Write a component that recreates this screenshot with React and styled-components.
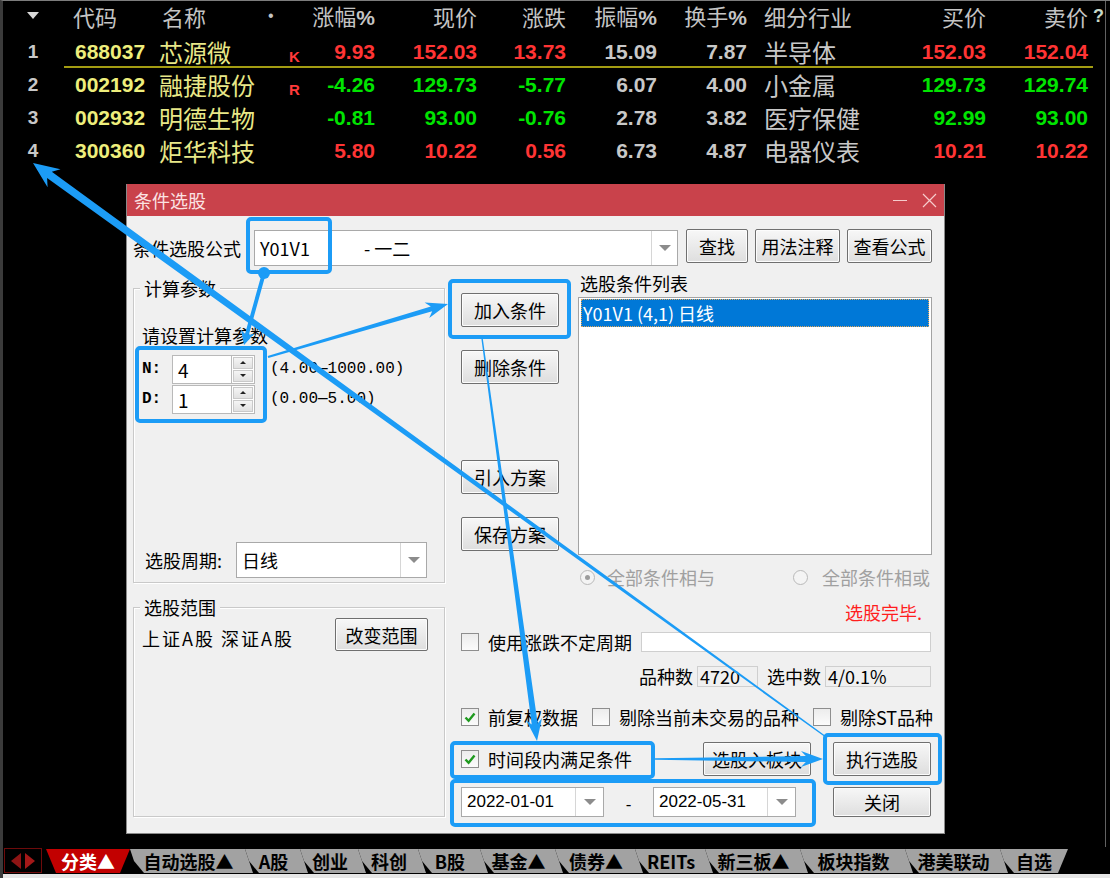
import React from "react";
import styled, { createGlobalStyle } from "styled-components";

const CJK = `"Noto Sans CJK SC", "Noto Sans", sans-serif`;
const NUM = `"Liberation Sans", Arial, sans-serif`;
const MONO = `"Liberation Mono", "DejaVu Sans Mono", monospace`;
const BLUE = "#1c9cf6";

const GlobalStyle = createGlobalStyle`
  * { box-sizing: border-box; }
  html, body { margin: 0; padding: 0; background: #000; }
  body { width: 1110px; height: 878px; overflow: hidden; font-family: ${CJK}; }
`;

const Screen = styled.div`
  position: relative;
  width: 1110px;
  height: 878px;
  background: #000;
  border-left: 3px solid #3b3b3b;
  border-top: 1px solid #7c7c7c;
  display: flex;
  flex-direction: column;
  overflow: hidden;
`;

const MainArea = styled.div`
  flex: 1;
  display: flex;
  min-height: 0;
`;

const Content = styled.div`
  flex: 1;
  display: flex;
  flex-direction: column;
  min-width: 0;
`;

const Rail = styled.div`
  width: 5px;
  flex: none;
  border-left: 1px solid #626262;
`;

/* ---------- quote table ---------- */
const QuoteRow = styled.div`
  position: relative;
  display: grid;
  grid-template-columns: 30px 111px 101px 50px 65px 102px 89px 91px 90px 153px 86px 102px auto;
  align-items: center;
  padding-left: 15px;
  height: ${(p) => (p.$header ? 34 : 33)}px;
  padding-bottom: ${(p) => (p.$header ? 4 : 0)}px;
  &::after {
    content: "";
    display: ${(p) => (p.$underline ? "block" : "none")};
    position: absolute;
    left: 61px;
    right: 12px;
    bottom: 0;
    height: 2px;
    background: #a39c12;
  }
`;

const HeadCell = styled.div`
  font-family: ${CJK};
  font-size: 22px;
  line-height: 1;
  color: #c4c4c4;
  white-space: nowrap;
  text-align: ${(p) => p.$align || "left"};
  padding-left: ${(p) => p.$pad || 0}px;
`;

const Pct = styled.span`
  font-family: ${NUM};
  font-weight: 700;
  font-size: 21px;
`;

const SortMark = styled.span`
  justify-self: center;
  width: 0;
  height: 0;
  border-left: 6px solid transparent;
  border-right: 6px solid transparent;
  border-top: 7px solid #d8d8d8;
  margin-bottom: 2px;
`;

const HeadDot = styled.span`
  font-family: ${NUM};
  font-size: 16px;
  color: #c4c4c4;
  padding-left: 8px;
`;

const HeadEdge = styled.span`
  font-family: ${NUM};
  font-weight: 700;
  font-size: 18px;
  color: #c8d8c8;
  padding-left: 5px;
`;

const RowIndex = styled.div`
  font-family: ${NUM};
  font-weight: 700;
  font-size: 19px;
  line-height: 1;
  color: #c8c8c8;
  text-align: center;
`;

const CodeCell = styled.div`
  font-family: ${NUM};
  font-weight: 700;
  font-size: 21px;
  line-height: 1;
  color: #eeee7c;
  padding-left: 27px;
`;

const NameCell = styled.div`
  font-family: ${CJK};
  font-size: 24px;
  line-height: 1;
  color: #e8e888;
  white-space: nowrap;
`;

const MarkCell = styled.div`
  font-family: ${NUM};
  font-weight: 700;
  font-size: 15px;
  line-height: 1;
  color: #ff3a3a;
  padding-left: 29px;
  margin-top: 10px;
`;

const TONES = { up: "#ff3434", down: "#00e400", flat: "#c8c8c8" };

const ValueCell = styled.div`
  font-family: ${NUM};
  font-weight: 700;
  font-size: 21px;
  line-height: 1;
  text-align: right;
  color: ${(p) => TONES[p.$tone]};
`;

const IndustryCell = styled.div`
  font-family: ${CJK};
  font-size: 24px;
  line-height: 1;
  color: #c8c8c8;
  padding-left: 17px;
  white-space: nowrap;
`;

/* ---------- workspace / dialog ---------- */
const Workspace = styled.div`
  flex: 1;
  padding: 17px 0 0 123px;
`;

const Dialog = styled.div`
  width: 819px;
  height: 650px;
  background: #f0f0f0;
  border: 1px solid #8a8a8a;
  border-top: none;
  display: flex;
  flex-direction: column;
  font-family: ${CJK};
  font-size: 18px;
  color: #000;
`;

const TitleBar = styled.div`
  height: 32px;
  flex: none;
  background: #c9424b;
  display: flex;
  align-items: center;
  justify-content: space-between;
  padding: 0 7px 0 7px;
  color: #fbe3e3;
  font-size: 18px;
  line-height: 1;
`;

const TitleControls = styled.div`
  display: flex;
  align-items: center;
  gap: 15px;
`;

const MinimizeGlyph = styled.span`
  width: 14px;
  height: 1px;
  background: #f6cccc;
`;

const DialogBody = styled.div`
  flex: 1;
  display: flex;
  flex-direction: column;
  padding: 14px 0 0 6px;
`;

const FormulaRow = styled.div`
  display: flex;
  align-items: flex-start;
  height: 36px;
`;

const FieldLabel = styled.div`
  width: ${(p) => p.$w}px;
  flex: none;
  line-height: ${(p) => p.$lh || 36}px;
  white-space: nowrap;
`;

const Combo = styled.div`
  width: ${(p) => p.$w}px;
  height: ${(p) => p.$h}px;
  flex: none;
  display: flex;
  background: #fff;
  border: 1px solid #a9a9a9;
`;

const ComboText = styled.div`
  flex: 1;
  display: flex;
  align-items: center;
  padding-left: ${(p) => p.$pad || 5}px;
  font-family: ${(p) => (p.$num ? NUM : CJK)};
  font-size: ${(p) => (p.$num ? 17 : 18)}px;
  white-space: pre;
  overflow: hidden;
`;

const ComboCode = styled.span`
  width: 104px;
`;

const DropButton = styled.div`
  width: ${(p) => p.$w || 26}px;
  flex: none;
  border-left: 1px solid #d6d6d6;
  display: flex;
  align-items: center;
  justify-content: center;
  &::after {
    content: "";
    border-left: 6px solid transparent;
    border-right: 6px solid transparent;
    border-top: 6px solid #8c8c8c;
  }
`;

const ButtonSet = styled.div`
  display: flex;
  gap: 7px;
  margin: -1px 0 0 8px;
`;

const PushButton = styled.button`
  width: ${(p) => p.$w}px;
  height: ${(p) => p.$h || 34}px;
  flex: none;
  padding: 0;
  margin: 0;
  font-family: ${CJK};
  font-size: 18px;
  line-height: 1;
  color: #000;
  background: linear-gradient(#f7f7f7, #dedede);
  border: 1px solid #6f6f6f;
  border-radius: 2px;
  box-shadow: inset 0 0 0 1px #fcfcfc;
`;

const ContentRow = styled.div`
  flex: 1;
  display: flex;
`;

const LeftColumn = styled.div`
  width: 312px;
  flex: none;
  display: flex;
  flex-direction: column;
  padding-top: 22px;
`;

const GroupBox = styled.div`
  position: relative;
  height: ${(p) => p.$h}px;
  margin-top: ${(p) => p.$mt || 0}px;
  border: 1px solid #c9c9c9;
  box-shadow: 1px 1px 0 #ffffff, inset 1px 1px 0 #ffffff;
  display: flex;
  flex-direction: column;
  padding: ${(p) => p.$pad};
`;

const Legend = styled.div`
  position: absolute;
  top: -13px;
  left: 6px;
  padding: 0 4px;
  background: #f0f0f0;
  line-height: 24px;
`;

const ParamTitle = styled.div`
  line-height: 24px;
`;

const ParamList = styled.div`
  margin-top: 7px;
  display: flex;
  flex-direction: column;
`;

const ParamRow = styled.div`
  display: flex;
  align-items: center;
  height: 30px;
`;

const ParamLabel = styled.div`
  width: 30px;
  font-family: ${MONO};
  font-size: 16px;
  font-weight: 700;
`;

const SpinField = styled.div`
  display: flex;
  height: 29px;
`;

const SpinInput = styled.div`
  width: 60px;
  background: #fff;
  border: 1px solid #b9b9b9;
  padding-left: 5px;
  line-height: 27px;
  font-size: 19px;
`;

const Spinner = styled.div`
  width: 23px;
  display: flex;
  flex-direction: column;
  border: 1px solid #b9b9b9;
  border-left: none;
  background: #fff;
  padding: 1px;
  gap: 1px;
`;

const SpinHalf = styled.div`
  flex: 1;
  background: linear-gradient(#f5f5f5, #e1e1e1);
  border: 1px solid #c9c9c9;
  display: flex;
  align-items: center;
  justify-content: center;
  &::after {
    content: "";
    border-left: 3px solid transparent;
    border-right: 3px solid transparent;
    ${(p) => (p.$up ? "border-bottom: 3px solid #222;" : "border-top: 3px solid #222;")}
  }
`;

const RangeText = styled.div`
  margin-left: 15px;
  font-family: ${MONO};
  font-size: 16px;
  white-space: nowrap;
`;

const PeriodRow = styled.div`
  margin-top: auto;
  margin-left: 3px;
  margin-bottom: 4px;
  display: flex;
  align-items: center;
`;

const RangeRow = styled.div`
  display: flex;
  justify-content: space-between;
  align-items: flex-start;
`;

const RangeMarkets = styled.div`
  line-height: 24px;
  margin-top: 8px;
  letter-spacing: 2px;
`;

/* right block */
const RightBlock = styled.div`
  width: 472px;
  margin-left: 16px;
  flex: none;
  display: flex;
  flex-direction: column;
`;

const TopSection = styled.div`
  height: 289px;
  display: flex;
`;

const MidButtons = styled.div`
  width: 98px;
  flex: none;
  display: flex;
  flex-direction: column;
  padding-top: 27px;
`;

const MidSlot = styled.div`
  margin-top: ${(p) => p.$mt || 0}px;
`;

const ListColumn = styled.div`
  width: 354px;
  margin-left: 19px;
  display: flex;
  flex-direction: column;
`;

const ListLabel = styled.div`
  margin-top: 5px;
  line-height: 24px;
  padding-left: 2px;
`;

const ListBox = styled.div`
  margin-top: 2px;
  height: 258px;
  background: #fff;
  border: 1px solid #a3a3a3;
  padding: 1px 2px;
`;

const ListItem = styled.div`
  height: 28px;
  line-height: 28px;
  padding-left: 2px;
  background: #0078d7;
  color: #fff;
  outline: 1px dotted #e0a65a;
  outline-offset: -1px;
`;

const RadioRow = styled.div`
  margin-top: 12px;
  height: 20px;
  display: flex;
  align-items: center;
  padding-left: 119px;
  color: #a0a0a0;
`;

const OptionItem = styled.div`
  width: ${(p) => (p.$w ? `${p.$w}px` : "auto")};
  flex: none;
  display: flex;
  align-items: center;
  gap: ${(p) => p.$gap || 9}px;
  line-height: 20px;
  white-space: nowrap;
`;

const RadioDot = styled.span`
  width: 15px;
  height: 15px;
  border-radius: 50%;
  border: 1px solid #b9b9b9;
  background: #f4f4f4;
  display: inline-flex;
  align-items: center;
  justify-content: center;
  &::after {
    content: "";
    width: 5px;
    height: 5px;
    border-radius: 50%;
    background: ${(p) => (p.$on ? "#9c9c9c" : "transparent")};
  }
`;

const StatusRow = styled.div`
  margin-top: 15px;
  height: 20px;
  line-height: 20px;
  text-align: right;
  padding-right: 11px;
  color: #ff1e1e;
`;

const PeriodCheckRow = styled.div`
  margin-top: 10px;
  height: 20px;
  display: flex;
  align-items: center;
`;

const TextBox = styled.div`
  width: ${(p) => p.$w}px;
  height: ${(p) => p.$h || 20}px;
  margin-left: ${(p) => p.$ml || 0}px;
  flex: none;
  background: ${(p) => (p.$readonly ? "#f0f0f0" : "#fff")};
  border: 1px solid #cfcfcf;
  padding-left: 2px;
  line-height: ${(p) => (p.$h || 20) - 2}px;
  white-space: nowrap;
`;

const CountRow = styled.div`
  margin-top: 14px;
  height: 21px;
  display: flex;
  align-items: center;
  padding-left: 178px;
`;

const CountLabel = styled.div`
  margin-left: ${(p) => p.$ml || 0}px;
  width: 54px;
  line-height: 21px;
`;

const OptionRow = styled.div`
  margin-top: 21px;
  height: 18px;
  display: flex;
  align-items: center;
`;

const CheckBox = styled.span`
  width: 18px;
  height: 18px;
  flex: none;
  border: 1px solid #8e8e8e;
  background: linear-gradient(#ececec, #fbfbfb);
  display: inline-flex;
  align-items: center;
  justify-content: center;
`;

const ActionGrid = styled.div`
  margin-top: 16px;
  display: grid;
  grid-template-columns: 372px 98px;
  grid-template-rows: 34px 30px;
  row-gap: 11px;
`;

const ActionLeft = styled.div`
  display: flex;
  align-items: center;
  justify-content: space-between;
  padding-right: 22px;
`;

const DateRow = styled.div`
  display: flex;
  align-items: center;
`;

const DateDash = styled.div`
  width: 49px;
  text-align: center;
  font-family: ${NUM};
  font-size: 17px;
  padding-top: 6px;
`;

/* ---------- tab bar ---------- */
const TabBar = styled.div`
  height: 27px;
  flex: none;
  display: flex;
  align-items: flex-end;
  padding: 0 0 1px 1px;
`;

const NavBox = styled.div`
  width: 38px;
  height: 25px;
  flex: none;
  border: 1px solid #6e0b0b;
  display: flex;
  align-items: center;
  justify-content: center;
  gap: 4px;
  margin-right: 4px;
`;

const NavArrow = styled.span`
  width: 0;
  height: 0;
  border-top: 8px solid transparent;
  border-bottom: 8px solid transparent;
  ${(p) =>
    p.$dir === "left"
      ? "border-right: 10px solid #8e1414;"
      : "border-left: 10px solid #a31818;"}
`;

const SHAPES = {
  trap: "polygon(0 0, 100% 0, calc(100% - 10px) 100%, 10px 100%)",
  mid: "polygon(0 0, calc(100% - 8px) 0, 100% 100%, 14px 100%, 4px 50%)",
  end: "polygon(0 0, 100% 0, calc(100% - 10px) 100%, 14px 100%, 4px 50%)",
};

const Tab = styled.div`
  width: ${(p) => p.$w}px;
  height: 24px;
  flex: none;
  margin-left: ${(p) => (p.$overlap ? -8 : 0)}px;
  background: ${(p) => (p.$active ? "#c20000" : "#a2a2a2")};
  color: ${(p) => (p.$active ? "#ffffff" : "#000000")};
  clip-path: ${(p) => SHAPES[p.$shape]};
  font-family: ${CJK};
  font-weight: 700;
  font-size: 18px;
  line-height: 24px;
  text-align: center;
  padding: ${(p) => (p.$shape === "mid" ? "0 10px 0 4px" : "0 4px")};
  white-space: nowrap;
  overflow: hidden;
`;

const BottomStrip = styled.div`
  height: 4px;
  flex: none;
  background: #e6e6e6;
`;

/* ---------- annotation overlay ---------- */
const Overlay = styled.svg`
  position: absolute;
  top: -1px;
  left: -3px;
  pointer-events: none;
`;

function arrowPoints(x1, y1, x2, y2, w1, w2, hl, hw) {
  const dx = x2 - x1;
  const dy = y2 - y1;
  const L = Math.hypot(dx, dy);
  const ux = dx / L;
  const uy = dy / L;
  const px = -uy;
  const py = ux;
  const sx = x2 - ux * hl * 0.78;
  const sy = y2 - uy * hl * 0.78;
  const bx = x2 - ux * hl;
  const by = y2 - uy * hl;
  const pts = [
    [x1 + (px * w1) / 2, y1 + (py * w1) / 2],
    [sx + (px * w2) / 2, sy + (py * w2) / 2],
    [bx + (px * hw) / 2, by + (py * hw) / 2],
    [x2, y2],
    [bx - (px * hw) / 2, by - (py * hw) / 2],
    [sx - (px * w2) / 2, sy - (py * w2) / 2],
    [x1 - (px * w1) / 2, y1 - (py * w1) / 2],
  ];
  return pts.map((p) => `${p[0].toFixed(1)},${p[1].toFixed(1)}`).join(" ");
}

const BOXES = [
  [246, 217, 332, 274],
  [135, 346, 267, 423],
  [448, 279, 571, 339],
  [450, 741, 655, 779],
  [450, 779, 816, 827],
  [823, 733, 942, 785],
];

const ARROWS = [
  [264, 273, 244, 345, 4, 4, 14, 14],
  [268, 357, 448, 304, 2, 5, 22, 16],
  [826, 737, 33, 163, 1.5, 8, 26, 22],
  [482, 338, 537, 741, 1.5, 6, 22, 16],
  [655, 759, 823, 759, 1.5, 6, 22, 16],
];

function Annotations() {
  return (
    <Overlay width="1110" height="878" viewBox="0 0 1110 878">
      {BOXES.map(([x1, y1, x2, y2], i) => (
        <rect
          key={i}
          x={x1 + 2}
          y={y1 + 2}
          width={x2 - x1 - 4}
          height={y2 - y1 - 4}
          rx="3"
          fill="none"
          stroke={BLUE}
          strokeWidth="4"
        />
      ))}
      <circle cx="264" cy="273" r="6" fill={BLUE} />
      {ARROWS.map((a, i) => (
        <polygon key={i} points={arrowPoints(...a)} fill={BLUE} />
      ))}
    </Overlay>
  );
}

/* ---------- data ---------- */
const ROWS = [
  { n: 1, code: "688037", name: "芯源微", mark: "K", pct: "9.93", price: "152.03", chg: "13.73", amp: "15.09", turn: "7.87", ind: "半导体", bid: "152.03", ask: "152.04", tone: "up", underline: true },
  { n: 2, code: "002192", name: "融捷股份", mark: "R", pct: "-4.26", price: "129.73", chg: "-5.77", amp: "6.07", turn: "4.00", ind: "小金属", bid: "129.73", ask: "129.74", tone: "down" },
  { n: 3, code: "002932", name: "明德生物", mark: "", pct: "-0.81", price: "93.00", chg: "-0.76", amp: "2.78", turn: "3.82", ind: "医疗保健", bid: "92.99", ask: "93.00", tone: "down" },
  { n: 4, code: "300360", name: "炬华科技", mark: "", pct: "5.80", price: "10.22", chg: "0.56", amp: "6.73", turn: "4.87", ind: "电器仪表", bid: "10.21", ask: "10.22", tone: "up" },
];

const TABS = [
  { label: "自动选股▲", w: 123, shape: "mid" },
  { label: "A股", w: 63, shape: "mid", overlap: true },
  { label: "创业", w: 66, shape: "mid", overlap: true },
  { label: "科创", w: 68, shape: "mid", overlap: true },
  { label: "B股", w: 70, shape: "mid", overlap: true },
  { label: "基金▲", w: 83, shape: "mid", overlap: true },
  { label: "债券▲", w: 88, shape: "mid", overlap: true },
  { label: "REITs", w: 78, shape: "mid", overlap: true },
  { label: "新三板▲", w: 103, shape: "mid", overlap: true },
  { label: "板块指数", w: 113, shape: "mid", overlap: true },
  { label: "港美联动", w: 103, shape: "mid", overlap: true },
  { label: "自选", w: 68, shape: "end", overlap: true },
];

const Check = () => (
  <svg width="12" height="11" viewBox="0 0 12 11">
    <path d="M1.5 5.5 L4.6 8.8 L10.5 1.5" fill="none" stroke="#1f9a1f" strokeWidth="2.4" />
  </svg>
);

const CloseGlyph = () => (
  <svg width="15" height="15" viewBox="0 0 15 15">
    <path d="M1 1 L14 14 M14 1 L1 14" stroke="#f6cccc" strokeWidth="1.2" />
  </svg>
);

function Option({ checked, label, w }) {
  return (
    <OptionItem $w={w}>
      <CheckBox>{checked && <Check />}</CheckBox>
      <span>{label}</span>
    </OptionItem>
  );
}

export default function App() {
  return (
    <>
      <GlobalStyle />
      <Screen>
        <MainArea>
          <Content>
            <QuoteRow $header>
              <SortMark />
              <HeadCell $pad={25}>代码</HeadCell>
              <HeadCell $pad={3}>名称</HeadCell>
              <HeadDot>•</HeadDot>
              <HeadCell $align="right">涨幅<Pct>%</Pct></HeadCell>
              <HeadCell $align="right">现价</HeadCell>
              <HeadCell $align="right">涨跌</HeadCell>
              <HeadCell $align="right">振幅<Pct>%</Pct></HeadCell>
              <HeadCell $align="right">换手<Pct>%</Pct></HeadCell>
              <HeadCell $pad={17}>细分行业</HeadCell>
              <HeadCell $align="right">买价</HeadCell>
              <HeadCell $align="right">卖价</HeadCell>
              <HeadEdge>?</HeadEdge>
            </QuoteRow>
            {ROWS.map((r) => (
              <QuoteRow key={r.n} $underline={r.underline}>
                <RowIndex>{r.n}</RowIndex>
                <CodeCell>{r.code}</CodeCell>
                <NameCell>{r.name}</NameCell>
                <MarkCell>{r.mark}</MarkCell>
                <ValueCell $tone={r.tone}>{r.pct}</ValueCell>
                <ValueCell $tone={r.tone}>{r.price}</ValueCell>
                <ValueCell $tone={r.tone}>{r.chg}</ValueCell>
                <ValueCell $tone="flat">{r.amp}</ValueCell>
                <ValueCell $tone="flat">{r.turn}</ValueCell>
                <IndustryCell>{r.ind}</IndustryCell>
                <ValueCell $tone={r.tone}>{r.bid}</ValueCell>
                <ValueCell $tone={r.tone}>{r.ask}</ValueCell>
              </QuoteRow>
            ))}

            <Workspace>
              <Dialog>
                <TitleBar>
                  <span>条件选股</span>
                  <TitleControls>
                    <MinimizeGlyph />
                    <CloseGlyph />
                  </TitleControls>
                </TitleBar>
                <DialogBody>
                  <FormulaRow>
                    <FieldLabel $w={121}>条件选股公式</FieldLabel>
                    <Combo $w={424} $h={36}>
                      <ComboText>
                        <ComboCode>Y01V1</ComboCode>
                        <span>- 一二</span>
                      </ComboText>
                      <DropButton />
                    </Combo>
                    <ButtonSet>
                      <PushButton $w={62}>查找</PushButton>
                      <PushButton $w={85}>用法注释</PushButton>
                      <PushButton $w={85}>查看公式</PushButton>
                    </ButtonSet>
                  </FormulaRow>

                  <ContentRow>
                    <LeftColumn>
                      <GroupBox $h={295} $pad="34px 0 0 8px">
                        <Legend>计算参数</Legend>
                        <ParamTitle>请设置计算参数</ParamTitle>
                        <ParamList>
                          <ParamRow>
                            <ParamLabel>N:</ParamLabel>
                            <SpinField>
                              <SpinInput>4</SpinInput>
                              <Spinner>
                                <SpinHalf $up />
                                <SpinHalf />
                              </Spinner>
                            </SpinField>
                            <RangeText>(4.00—1000.00)</RangeText>
                          </ParamRow>
                          <ParamRow>
                            <ParamLabel>D:</ParamLabel>
                            <SpinField>
                              <SpinInput>1</SpinInput>
                              <Spinner>
                                <SpinHalf $up />
                                <SpinHalf />
                              </Spinner>
                            </SpinField>
                            <RangeText>(0.00—5.00)</RangeText>
                          </ParamRow>
                        </ParamList>
                        <PeriodRow>
                          <FieldLabel $w={91}>选股周期:</FieldLabel>
                          <Combo $w={191} $h={36}>
                            <ComboText>日线</ComboText>
                            <DropButton />
                          </Combo>
                        </PeriodRow>
                      </GroupBox>

                      <GroupBox $h={210} $mt={24} $pad="10px 16px 0 8px">
                        <Legend>选股范围</Legend>
                        <RangeRow>
                          <RangeMarkets>上证A股 深证A股</RangeMarkets>
                          <PushButton $w={93} $h={33}>改变范围</PushButton>
                        </RangeRow>
                      </GroupBox>
                    </LeftColumn>

                    <RightBlock>
                      <TopSection>
                        <MidButtons>
                          <PushButton $w={98}>加入条件</PushButton>
                          <MidSlot $mt={23}>
                            <PushButton $w={98}>删除条件</PushButton>
                          </MidSlot>
                          <MidSlot $mt={76}>
                            <PushButton $w={98}>引入方案</PushButton>
                          </MidSlot>
                          <MidSlot $mt={23}>
                            <PushButton $w={98}>保存方案</PushButton>
                          </MidSlot>
                        </MidButtons>
                        <ListColumn>
                          <ListLabel>选股条件列表</ListLabel>
                          <ListBox>
                            <ListItem>Y01V1 (4,1) 日线</ListItem>
                          </ListBox>
                        </ListColumn>
                      </TopSection>

                      <RadioRow>
                        <OptionItem $w={213} $gap={12}>
                          <RadioDot $on />
                          <span>全部条件相与</span>
                        </OptionItem>
                        <OptionItem $gap={14}>
                          <RadioDot />
                          <span>全部条件相或</span>
                        </OptionItem>
                      </RadioRow>

                      <StatusRow>选股完毕.</StatusRow>

                      <PeriodCheckRow>
                        <Option w={180} label="使用涨跌不定周期" />
                        <TextBox $w={290} />
                      </PeriodCheckRow>

                      <CountRow>
                        <CountLabel>品种数</CountLabel>
                        <TextBox $readonly $w={61} $h={21} $ml={4}>4720</TextBox>
                        <CountLabel $ml={9}>选中数</CountLabel>
                        <TextBox $readonly $w={106} $h={21} $ml={4}>4/0.1%</TextBox>
                      </CountRow>

                      <OptionRow>
                        <Option w={131} checked label="前复权数据" />
                        <Option w={221} label="剔除当前未交易的品种" />
                        <Option label="剔除ST品种" />
                      </OptionRow>

                      <ActionGrid>
                        <ActionLeft>
                          <Option checked label="时间段内满足条件" />
                          <PushButton $w={108}>选股入板块</PushButton>
                        </ActionLeft>
                        <PushButton $w={98} $h={34}>执行选股</PushButton>
                        <DateRow>
                          <Combo $w={143} $h={30}>
                            <ComboText $num>2022-01-01</ComboText>
                            <DropButton $w={28} />
                          </Combo>
                          <DateDash>-</DateDash>
                          <Combo $w={143} $h={30}>
                            <ComboText $num>2022-05-31</ComboText>
                            <DropButton $w={28} />
                          </Combo>
                        </DateRow>
                        <PushButton $w={98} $h={30}>关闭</PushButton>
                      </ActionGrid>
                    </RightBlock>
                  </ContentRow>
                </DialogBody>
              </Dialog>
            </Workspace>
          </Content>
          <Rail />
        </MainArea>

        <TabBar>
          <NavBox>
            <NavArrow $dir="left" />
            <NavArrow $dir="right" />
          </NavBox>
          <Tab $w={84} $shape="trap" $active>
            分类▲
          </Tab>
          {TABS.map((t) => (
            <Tab key={t.label} $w={t.w} $shape={t.shape} $overlap={t.overlap}>
              {t.label}
            </Tab>
          ))}
        </TabBar>
        <BottomStrip />
        <Annotations />
      </Screen>
    </>
  );
}
